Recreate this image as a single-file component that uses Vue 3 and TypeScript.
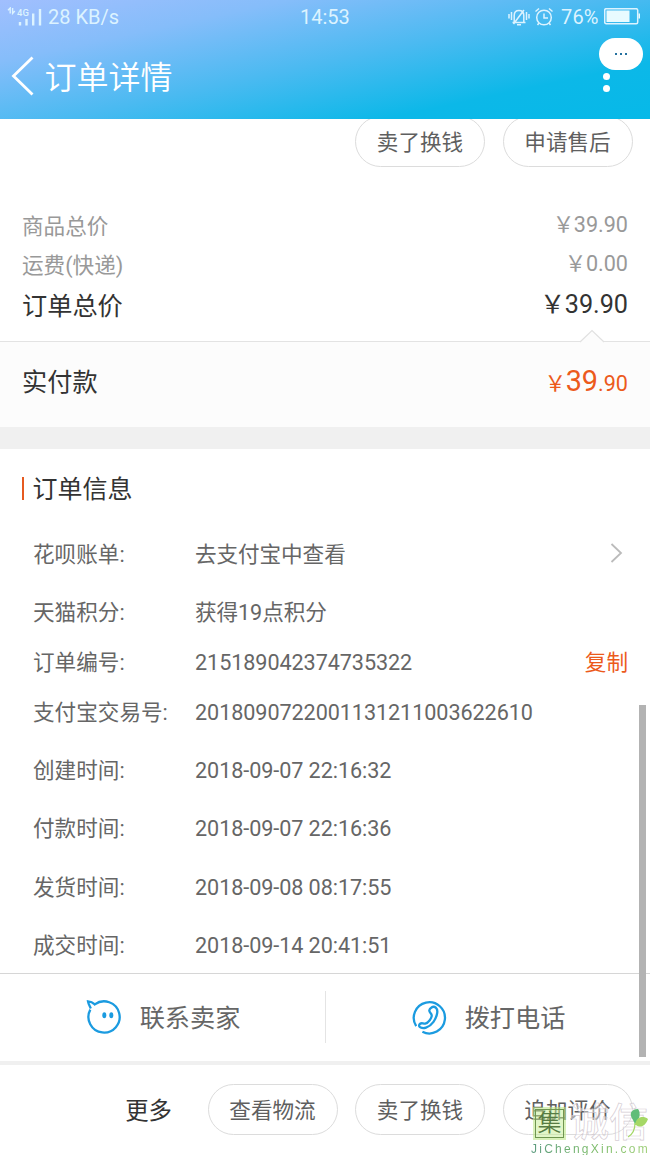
<script setup lang="ts">
interface Row {
  label: string
  value: string
  compact?: boolean
  action?: 'arrow' | 'copy'
}

const rows: Row[] = [
  { label: '花呗账单:', value: '去支付宝中查看', action: 'arrow' },
  { label: '天猫积分:', value: '获得19点积分' },
  { label: '订单编号:', value: '215189042374735322', compact: true, action: 'copy' },
  { label: '支付宝交易号:', value: '2018090722001131211003622610', compact: true },
  { label: '创建时间:', value: '2018-09-07 22:16:32' },
  { label: '付款时间:', value: '2018-09-07 22:16:36' },
  { label: '发货时间:', value: '2018-09-08 08:17:55' },
  { label: '成交时间:', value: '2018-09-14 20:41:51' },
]

const orderActions: string[] = ['卖了换钱', '申请售后']
const footerActions: string[] = ['查看物流', '卖了换钱', '追加评价']
</script>

<template>
  <div class="page">
    <header class="header">
      <div class="status">
        <svg class="signal" width="36" height="20" viewBox="0 0 36 20">
          <path d="M3.200 6.500V1L1 3.300M5.600 1v5.500L7.800 4" />
          <text x="10" y="8.600">4G</text>
          <path class="bars" d="M13 15v3.500M19.500 12v6.500M26.200 6.500v12M33 2v16.500" />
        </svg>
        <span class="speed">28 KB/s</span>
        <span class="clock">14:53</span>
        <div class="status-right">
          <svg width="22" height="20" viewBox="0 0 22 20">
            <path d="M4.500 15.500h13M6.200 15.500V8.500q0-5 4.800-5t4.800 5v7M9 17.700h4M5.500 17L16 3M3.500 5v8M1 7v4.500M18.500 5v8M21 7v4.500" />
          </svg>
          <svg width="20" height="20" viewBox="0 0 20 20">
            <circle cx="10" cy="10.500" r="7.300" />
            <path d="M10 6.500v4.500h4M1.500 4.500L5 1.500M18.500 4.500L15 1.500M5 16l-1.500 2M15 16l1.500 2" />
          </svg>
          <span class="percent">76%</span>
          <svg width="37" height="17" viewBox="0 0 37 17">
            <rect x=".7" y=".7" width="33" height="15" rx="1.500" />
            <path class="solid" d="M2.500 2.500h23v11.500h-23zM34.500 5.500h1.500v5h-1.500z" />
          </svg>
        </div>
      </div>
      <div class="title-bar">
        <svg class="back" width="24" height="40" viewBox="0 0 24 40">
          <path d="M21.500 1.500L2.500 20L21.500 38.500" />
        </svg>
        <h1>订单详情</h1>
      </div>
      <div class="menu-dots"><i></i><i></i></div>
      <div class="bubble"><i></i><i></i><i></i></div>
    </header>

    <section class="order-actions">
      <button v-for="a in orderActions" :key="a" class="pill">{{ a }}</button>
    </section>

    <section class="totals">
      <div class="line"><span>商品总价</span><span class="amount"><b class="yen">￥</b>39.90</span></div>
      <div class="line"><span>运费(快递)</span><span class="amount"><b class="yen">￥</b>0.00</span></div>
      <div class="line grand"><span>订单总价</span><span class="amount"><b class="yen">￥</b>39.90</span></div>
    </section>

    <section class="paid">
      <svg class="notch" width="26" height="14" viewBox="0 0 26 14">
        <path d="M1 13L13 1.500L25 13" />
      </svg>
      <span>实付款</span>
      <span class="price"><b class="yen">￥</b><span class="big">39</span>.90</span>
    </section>

    <div class="gap"></div>

    <section class="info">
      <h2>订单信息</h2>
      <div v-for="r in rows" :key="r.label" class="row" :class="{ compact: r.compact }">
        <span class="label">{{ r.label }}</span>
        <span class="value">{{ r.value }}</span>
        <svg v-if="r.action === 'arrow'" class="arrow" width="13" height="22" viewBox="0 0 13 22">
          <path d="M1.500 2L11 11L1.500 20" />
        </svg>
        <span v-if="r.action === 'copy'" class="copy">复制</span>
      </div>
    </section>

    <section class="contact">
      <div class="contact-item">
        <svg width="36" height="36" viewBox="0 0 36 36">
          <path d="M4.800 9.500C3.500 6.500 2.300 4.500 2 2.300C4.600 2.400 6.800 3.400 8.800 5.400A15.600 15.600 0 1 1 4.300 10.600" />
          <ellipse class="fill" cx="18.300" cy="16.300" rx="2" ry="3" />
          <ellipse class="fill" cx="25.300" cy="16.300" rx="2" ry="3" />
        </svg>
        <span>联系卖家</span>
      </div>
      <div class="contact-item">
        <svg width="36" height="36" viewBox="0 0 36 36">
          <path d="M5.200 27.200A15.600 15.600 0 1 1 11.400 32.800" />
          <path d="M20.500 8.500C23.500 6.300 27 9.400 26.200 14C25.200 20 21 26.600 15 28.700C11.200 30 6.800 28.200 8.500 25.300C9.700 23.200 12 24.800 14.200 24.600C17.500 24 20.800 19.200 20.700 16.300C20.600 14.200 18 13.500 18.300 11.300C18.500 10 19.300 9.300 20.500 8.500Z" />
        </svg>
        <span>拨打电话</span>
      </div>
    </section>

    <footer class="footer">
      <span class="more">更多</span>
      <button v-for="a in footerActions" :key="a" class="pill">{{ a }}</button>
    </footer>

    <div class="scrollbar"></div>

    <div class="watermark">
      <div class="mark-top">
        <span class="seal">集</span>
        <span class="outline">诚信</span>
      </div>
      <svg class="leaf" width="24" height="32" viewBox="0 0 24 32">
        <path d="M5 13C0 6 4 2 10 2C13 6 12 12 7 17Z" fill="#5fbd78" />
        <path d="M7 18C8 10 15 8 20 12C18 18 13 22 8 18Z" fill="#a5d866" />
        <path d="M7 16Q7 26 0 30" fill="none" stroke="#a5d866" stroke-width="1.200" />
      </svg>
      <div class="domain">JiChengXin.com</div>
    </div>
  </div>
</template>

<style>
body {
  margin: 0;
}
</style>

<style scoped>
.page {
  position: relative;
  width: 650px;
  height: 1155px;
  overflow: hidden;
  background: #fff;
  color: #666;
  font-family: Roboto, "Noto Sans CJK SC", sans-serif;
  font-size: 21.6px;
  line-height: 30px;
}
svg {
  display: block;
  flex: none;
  fill: none;
}
.header {
  position: relative;
  height: 119px;
  background: linear-gradient(168deg, #a1bffe 0%, #85bdfa 24%, #4bbaf1 51%, #0cb8e8 78%, #06b9e8 100%);
  color: #fff;
}
.status {
  display: flex;
  align-items: center;
  height: 33px;
  padding: 0 9px 0 7px;
  color: #dcf3ff;
  font-size: 20px;
}
.status svg {
  stroke: #dcf3ff;
  stroke-width: 1.5;
}
.status .signal {
  stroke-width: 1.4;
}
.signal text {
  fill: #dcf3ff;
  stroke: none;
  font-size: 9.5px;
  font-weight: 500;
}
.signal .bars {
  stroke-width: 2.4;
}
.status .solid {
  fill: #e8fbff;
  stroke: none;
}
.speed {
  width: 252px;
  margin-left: 5px;
}
.status-right {
  display: flex;
  align-items: center;
  gap: 5.5px;
  margin-left: auto;
}
.status-right svg:nth-child(2) {
  margin-left: -2px;
  margin-right: 2px;
}
.percent {
  letter-spacing: 0.1px;
}
.title-bar {
  display: flex;
  align-items: center;
  gap: 9.5px;
  height: 86px;
  padding-left: 11px;
  box-sizing: border-box;
}
.back {
  stroke: #fff;
  stroke-width: 2.8;
}
h1 {
  margin: 3px 0 0;
  font-size: 32px;
  font-weight: 350;
  line-height: 40px;
}
.menu-dots {
  position: absolute;
  left: 603px;
  top: 73px;
  display: grid;
  gap: 5px;
}
.menu-dots i {
  width: 7px;
  height: 7px;
  border-radius: 50%;
  background: #fff;
}
.bubble {
  position: absolute;
  left: 599px;
  top: 38px;
  width: 44px;
  height: 32px;
  border-radius: 16px;
  display: flex;
  align-items: center;
  justify-content: center;
  gap: 3px;
  background: #fff;
}
.bubble i {
  width: 2px;
  height: 2px;
  background: #24719f;
}
.pill {
  flex: none;
  box-sizing: border-box;
  width: 130px;
  height: 51px;
  padding: 2px 0 0;
  border: 1px solid #dcdcdc;
  border-radius: 26px;
  background: #fff;
  color: #5f5f5f;
  font: inherit;
}
.footer .pill {
  padding-top: 4px;
}
.order-actions {
  display: flex;
  align-items: flex-end;
  justify-content: flex-end;
  gap: 17.5px;
  height: 48px;
  padding-right: 17.5px;
  overflow: hidden;
}
.totals {
  box-sizing: border-box;
  height: 174px;
  padding: 44px 22px 0;
  color: #999;
}
.line {
  display: flex;
  justify-content: space-between;
  height: 39px;
  line-height: 32px;
}
.amount {
  margin-top: -2px;
}
.yen {
  margin-right: -0.5px;
  font-weight: 400;
}
.grand {
  color: #333;
  font-size: 25.2px;
  line-height: 35px;
}
.paid {
  position: relative;
  display: flex;
  align-items: center;
  justify-content: space-between;
  box-sizing: border-box;
  height: 86px;
  padding: 0 22px 4px;
  border-top: 1px solid #e3e3e3;
  background: #fcfcfc;
  color: #333;
  font-size: 25.2px;
}
.notch {
  position: absolute;
  left: 579px;
  top: -13px;
}
.notch path {
  fill: #fcfcfc;
  stroke: #e1e1e1;
  stroke-width: 1.2;
}
.price {
  color: #ec5a1c;
  font-size: 21.6px;
}
.big {
  font-size: 28.800px;
}
.gap {
  height: 22px;
  background: #f0f0f0;
}
.info {
  box-sizing: border-box;
  height: 524px;
  padding: 26px 22px 0;
}
h2 {
  position: relative;
  margin: 0 0 -6px;
  padding-left: 10.5px;
  height: 30px;
  color: #333;
  font-size: 25px;
  font-weight: 400;
}
h2::before {
  content: "";
  position: absolute;
  left: 0;
  top: 2px;
  width: 2px;
  height: 23px;
  background: #e65a20;
}
.row {
  display: flex;
  align-items: center;
  height: 30px;
  margin-top: 28.300px;
  padding-left: 11px;
}
h2 + .row {
  margin-top: 40.6px;
}
.row.compact {
  margin-top: 20px;
}
.label {
  width: 162px;
}
.value {
  flex: 1;
  letter-spacing: -0.07px;
}
.arrow {
  margin: -3px 5px 0 0;
  stroke: #bbb;
  stroke-width: 1.8;
}
.copy {
  color: #ec5a1c;
}
.contact {
  display: flex;
  box-sizing: border-box;
  height: 92px;
  border-top: 1px solid #d6d6d6;
  border-bottom: 4px solid #f0f0f0;
  font-size: 25.2px;
}
.contact-item {
  display: flex;
  flex: 1;
  align-items: center;
  justify-content: center;
  gap: 18px;
  padding-left: 1px;
}
.contact-item span {
  padding-top: 3px;
}
.contact-item + .contact-item {
  position: relative;
}
.contact-item + .contact-item::before {
  content: "";
  position: absolute;
  left: 0;
  top: 17px;
  width: 1px;
  height: 52px;
  background: #e4e4e4;
}
.contact svg {
  margin-top: -2px;
  stroke: #1b9be0;
  stroke-width: 2.3;
}
.contact .fill {
  fill: #1b9be0;
  stroke: none;
}
.footer {
  display: flex;
  align-items: center;
  justify-content: flex-end;
  gap: 17.5px;
  box-sizing: border-box;
  height: 90px;
  padding: 0 17.5px 2px 0;
}
.more {
  margin-right: 18px;
  padding-top: 4px;
  color: #333;
  font-size: 23.400px;
}
.scrollbar {
  position: absolute;
  left: 639px;
  top: 705px;
  width: 7px;
  height: 352px;
  background: #b3b3b3;
}
.watermark {
  position: absolute;
  left: 531px;
  top: 1105px;
  width: 119px;
  height: 50px;
}
.mark-top {
  display: flex;
  align-items: center;
  gap: 6px;
  height: 37px;
  padding-left: 4px;
}
.seal {
  box-sizing: border-box;
  width: 29px;
  height: 29px;
  border: 1.5px solid #6f9650;
  outline: 2px solid rgba(185, 230, 130, 0.55);
  background: rgba(195, 238, 145, 0.5);
  color: #567c43;
  font-size: 24px;
  font-weight: 350;
  line-height: 26px;
  text-align: center;
}
.outline {
  color: rgba(255, 255, 255, 0.45);
  font-size: 39px;
  font-weight: 500;
  line-height: 37px;
  -webkit-text-stroke: 0.7px rgba(205, 195, 203, 0.85);
  white-space: nowrap;
}
.leaf {
  position: absolute;
  left: 97px;
  top: 2px;
}
.domain {
  background: linear-gradient(90deg, #5d9c80, #78b968 50%, #a0d078);
  background-clip: text;
  color: transparent;
  font-family: "Liberation Sans", sans-serif;
  font-size: 12px;
  line-height: 14px;
  letter-spacing: 2.25px;
  white-space: nowrap;
}
</style>
